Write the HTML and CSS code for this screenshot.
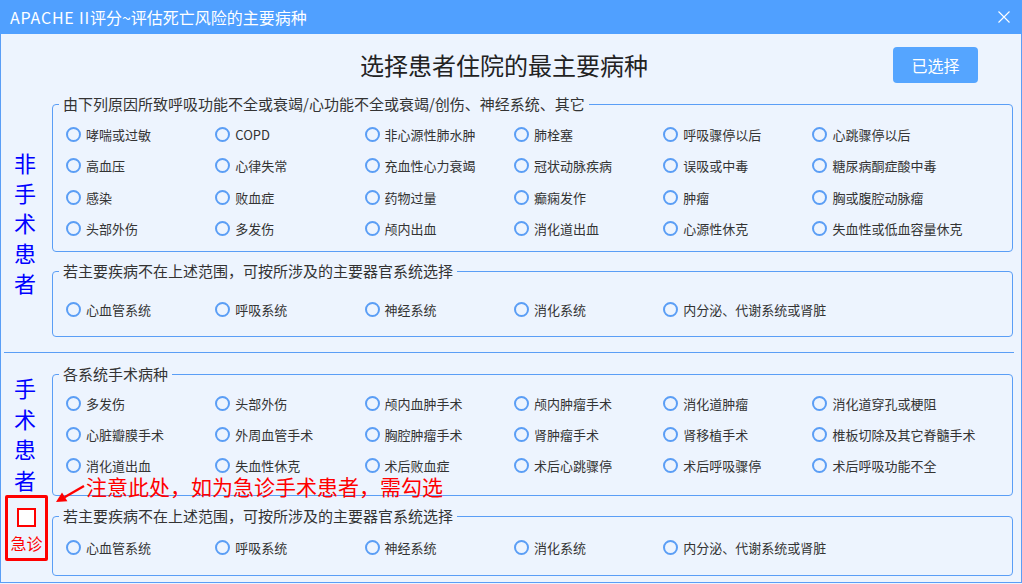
FILE: index.html
```html
<!DOCTYPE html>
<html lang="zh-CN">
<head>
  <meta charset="UTF-8">
  <title>APACHE II评分</title>
  <link rel="stylesheet" href="styles.css">
</head>
<body>

  <div class="window">
    <div class="title-bar">
      <span class="title-text"><span class="title-latin">APACHE II</span>评分~评估死亡风险的主要病种</span>
      <svg class="close-icon" width="12" height="12" viewBox="0 0 12 12">
        <path d="M0.5 0.5 L11.5 11.5 M11.5 0.5 L0.5 11.5" stroke="#fff" stroke-width="1.1" fill="none"/>
      </svg>
    </div>

    <div class="header">
      <h1 class="heading">选择患者住院的最主要病种</h1>
      <button class="select-btn">已选择</button>
    </div>

    <!-- 非手术患者 -->
    <div class="section section-first">
      <div class="side-label">
        <div class="side-text">非<br>手<br>术<br>患<br>者</div>
      </div>
      <div class="groups">
        <fieldset class="group">
          <legend>由下列原因所致呼吸功能不全或衰竭/心功能不全或衰竭/创伤、神经系统、其它</legend>
          <div class="options opts-a">
            <label class="option"><span class="radio"></span>哮喘或过敏</label>
            <label class="option"><span class="radio"></span>COPD</label>
            <label class="option"><span class="radio"></span>非心源性肺水肿</label>
            <label class="option"><span class="radio"></span>肺栓塞</label>
            <label class="option"><span class="radio"></span>呼吸骤停以后</label>
            <label class="option"><span class="radio"></span>心跳骤停以后</label>
            <label class="option"><span class="radio"></span>高血压</label>
            <label class="option"><span class="radio"></span>心律失常</label>
            <label class="option"><span class="radio"></span>充血性心力衰竭</label>
            <label class="option"><span class="radio"></span>冠状动脉疾病</label>
            <label class="option"><span class="radio"></span>误吸或中毒</label>
            <label class="option"><span class="radio"></span>糖尿病酮症酸中毒</label>
            <label class="option"><span class="radio"></span>感染</label>
            <label class="option"><span class="radio"></span>败血症</label>
            <label class="option"><span class="radio"></span>药物过量</label>
            <label class="option"><span class="radio"></span>癫痫发作</label>
            <label class="option"><span class="radio"></span>肿瘤</label>
            <label class="option"><span class="radio"></span>胸或腹腔动脉瘤</label>
            <label class="option"><span class="radio"></span>头部外伤</label>
            <label class="option"><span class="radio"></span>多发伤</label>
            <label class="option"><span class="radio"></span>颅内出血</label>
            <label class="option"><span class="radio"></span>消化道出血</label>
            <label class="option"><span class="radio"></span>心源性休克</label>
            <label class="option"><span class="radio"></span>失血性或低血容量休克</label>
          </div>
        </fieldset>

        <fieldset class="group group-gap">
          <legend>若主要疾病不在上述范围，可按所涉及的主要器官系统选择</legend>
          <div class="options opts-b">
            <label class="option"><span class="radio"></span>心血管系统</label>
            <label class="option"><span class="radio"></span>呼吸系统</label>
            <label class="option"><span class="radio"></span>神经系统</label>
            <label class="option"><span class="radio"></span>消化系统</label>
            <label class="option"><span class="radio"></span>内分泌、代谢系统或肾脏</label>
          </div>
        </fieldset>
      </div>
    </div>

    <!-- 手术患者 -->
    <div class="section section-second">
      <div class="side-label">
        <div class="side-text">手<br>术<br>患<br>者</div>
        <div class="emergency">
          <span class="check"></span>
          <span class="emergency-text">急诊</span>
        </div>
      </div>
      <div class="groups">
        <fieldset class="group">
          <legend>各系统手术病种</legend>
          <div class="options opts-c">
            <label class="option"><span class="radio"></span>多发伤</label>
            <label class="option"><span class="radio"></span>头部外伤</label>
            <label class="option"><span class="radio"></span>颅内血肿手术</label>
            <label class="option"><span class="radio"></span>颅内肿瘤手术</label>
            <label class="option"><span class="radio"></span>消化道肿瘤</label>
            <label class="option"><span class="radio"></span>消化道穿孔或梗阻</label>
            <label class="option"><span class="radio"></span>心脏瓣膜手术</label>
            <label class="option"><span class="radio"></span>外周血管手术</label>
            <label class="option"><span class="radio"></span>胸腔肿瘤手术</label>
            <label class="option"><span class="radio"></span>肾肿瘤手术</label>
            <label class="option"><span class="radio"></span>肾移植手术</label>
            <label class="option"><span class="radio"></span>椎板切除及其它脊髓手术</label>
            <label class="option"><span class="radio"></span>消化道出血</label>
            <label class="option"><span class="radio"></span>失血性休克</label>
            <label class="option"><span class="radio"></span>术后败血症</label>
            <label class="option"><span class="radio"></span>术后心跳骤停</label>
            <label class="option"><span class="radio"></span>术后呼吸骤停</label>
            <label class="option"><span class="radio"></span>术后呼吸功能不全</label>
          </div>
        </fieldset>

        <fieldset class="group group-gap2">
          <legend>若主要疾病不在上述范围，可按所涉及的主要器官系统选择</legend>
          <div class="options opts-d">
            <label class="option"><span class="radio"></span>心血管系统</label>
            <label class="option"><span class="radio"></span>呼吸系统</label>
            <label class="option"><span class="radio"></span>神经系统</label>
            <label class="option"><span class="radio"></span>消化系统</label>
            <label class="option"><span class="radio"></span>内分泌、代谢系统或肾脏</label>
          </div>
        </fieldset>
      </div>

      <div class="note">注意此处，如为急诊手术患者，需勾选</div>
      <svg class="note-arrow" width="36" height="26" viewBox="0 0 36 26">
        <line x1="34" y1="5" x2="14.5" y2="16.2" stroke="#ff0000" stroke-width="2.4"/>
        <polygon points="6,21 17.4,20.2 12,11.4" fill="#ff0000"/>
      </svg>
    </div>
  </div>

</body>
</html>
```

FILE: styles.css
```css
* {
  margin: 0;
  padding: 0;
  box-sizing: border-box;
}

html, body {
  width: 1022px;
  height: 584px;
  overflow: hidden;
  font-family: "Noto Sans CJK SC", "Noto Sans", sans-serif;
  background-color: #edf4fe;
  color: #333;
}

.window {
  width: 1022px;
  height: 583px;
  border: 1px solid #5a9ef6;
  border-top: none;
  background-color: #edf4fe;
}

.title-bar {
  height: 34px;
  margin: 0 -1px;
  background-color: #50a0ff;
  display: flex;
  align-items: center;
  justify-content: space-between;
  padding: 0 12px 0 10px;
}

.title-text {
  color: #fff;
  font-size: 16px;
  line-height: 20px;
}

.title-latin {
  letter-spacing: 0.8px;
}

.header {
  height: 61px;
  display: grid;
  grid-template-columns: 1fr auto 1fr;
  align-items: center;
  padding-right: 14px;
}

.heading {
  grid-column: 2;
  font-size: 24px;
  font-weight: normal;
  line-height: 30px;
  color: #222;
}

.select-btn {
  grid-column: 3;
  justify-self: end;
  margin-right: 29px;
  width: 85px;
  height: 36px;
  border: none;
  border-radius: 4px;
  background-color: #55a5ff;
  color: #fff;
  font-family: inherit;
  font-size: 16px;
}

.section {
  display: flex;
  margin: 0 7px 0 3px;
}

.section-first {
  padding-bottom: 15px;
  border-bottom: 1px solid #5a9ef6;
}

.section-second {
  position: relative;
  padding-top: 12px;
}

.side-label {
  width: 45px;
  display: flex;
  flex-direction: column;
  align-items: center;
  justify-content: center;
}

.side-text {
  color: #0000ff;
  font-size: 22px;
  line-height: 30px;
  text-align: center;
  margin-right: 3px;
}

.section-first .side-text {
  margin-top: 12px;
}

.section-second .side-text {
  margin-top: -8px;
  line-height: 30.5px;
}

.emergency {
  margin-top: 1px;
  width: 43px;
  height: 66px;
  border: 3px solid #ff0000;
  border-radius: 2px;
  display: flex;
  flex-direction: column;
  align-items: center;
  padding-top: 10px;
}

.check {
  width: 19px;
  height: 19px;
  border: 2.5px solid #ff0000;
  background-color: #fff;
}

.emergency-text {
  margin-top: 6px;
  color: #ff0000;
  font-size: 16px;
  line-height: 20px;
}

.groups {
  flex: 1;
  margin-left: 3px;
  margin-right: 1px;
}

.group {
  border: 1px solid #5a9ef6;
  border-radius: 4px;
  padding: 0;
  margin: 0;
  min-width: 0;
}

.group legend {
  margin-left: 6px;
  padding: 0 4px;
  font-size: 15px;
  line-height: 18px;
  color: #333;
}

.group-gap {
  margin-top: 10px;
}

.group-gap2 {
  margin-top: 11px;
}

.options {
  display: grid;
  grid-template-columns: repeat(6, 149.3px);
  grid-auto-rows: 31px;
  padding-left: 13px;
}

.opts-a { padding-top: 6px; padding-bottom: 7px; grid-auto-rows: 31.3px; }
.opts-b { padding-top: 14px; padding-bottom: 11px; }
.opts-c { padding-top: 5px; padding-bottom: 14px; }
.opts-d { padding-top: 7px; padding-bottom: 12px; }

.option {
  display: flex;
  align-items: center;
  gap: 5px;
  font-size: 13px;
  line-height: 15px;
  color: #333;
  white-space: nowrap;
}

.radio {
  width: 15px;
  height: 15px;
  border: 2px solid #5b9ef5;
  border-radius: 50%;
  flex-shrink: 0;
}

.note {
  position: absolute;
  left: 82px;
  top: 123px;
  color: #ff0000;
  font-size: 21px;
  line-height: 21px;
  white-space: nowrap;
}

.note-arrow {
  position: absolute;
  left: 46px;
  top: 128px;
}
```
